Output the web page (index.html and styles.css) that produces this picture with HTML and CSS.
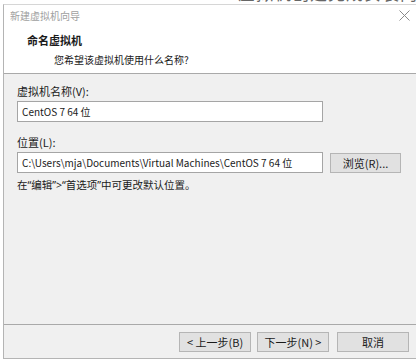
FILE: index.html
```html
<!DOCTYPE html>
<html lang="zh">
<head>
<meta charset="utf-8">
<link rel="stylesheet" href="styles.css">
</head>
<body>
<div class="strip"><span class="strip-text">虚拟机创建完成安装向导</span></div>
<div class="window">
  <div class="titlebar">
    <span class="title">新建虚拟机向导</span>
    <svg class="close" width="11" height="11" viewBox="0 0 11 11"><path d="M0.5 0.5 L10.5 10.5 M10.5 0.5 L0.5 10.5" stroke="#8a8a8a" stroke-width="1" fill="none"/></svg>
  </div>
  <div class="header">
    <div class="h-title">命名虚拟机</div>
    <div class="h-sub">您希望该虚拟机使用什么名称?</div>
  </div>
  <div class="content">
    <div class="label first">虚拟机名称(V):</div>
    <div class="row"><div class="input">CentOS 7 64 位</div></div>
    <div class="label second">位置(L):</div>
    <div class="row">
      <div class="input">C:\Users\mja\Documents\Virtual Machines\CentOS 7 64 位</div>
      <div class="btn browse">浏览(R)...</div>
    </div>
    <div class="hint">在<span class="q">“</span>编辑<span class="q">”&gt;“</span>首选项<span class="q">”</span>中可更改默认位置。</div>
  </div>
  <div class="footer">
    <div class="btn">&lt; 上一步(B)</div>
    <div class="btn">下一步(N) &gt;</div>
    <div class="btn cancel">取消</div>
  </div>
</div>
</body>
</html>
```
FILE: styles.css
```css
html, body {
  margin: 0;
  padding: 0;
  background: #ffffff;
  width: 416px;
  height: 361px;
  overflow: hidden;
  font-family: "Noto Sans CJK SC", "Noto Sans", sans-serif;
  font-size: 11px;
  color: #1a1a1a;
}
.strip {
  height: 4px;
  overflow: hidden;
}
.strip-text {
  display: block;
  padding-left: 238px;
  font-size: 17px;
  letter-spacing: 1px;
  color: #666;
  white-space: nowrap;
  line-height: 20px;
  transform: translateY(-17px);
}
.window {
  margin-left: 3px;
  border-left: 1px solid #b4b4b4;
  border-top: 1px solid #d6d6d6;
  border-bottom: 1px solid #b4b4b4;
  height: 355px;
  box-sizing: border-box;
  display: flex;
  flex-direction: column;
}
.titlebar {
  height: 20px;
  background: #fff;
  display: flex;
  align-items: center;
  justify-content: space-between;
  padding: 0 6px 0 6px;
  flex-shrink: 0;
}
.title {
  font-size: 10px;
  color: #a0a0a0;
}
.header {
  height: 49px;
  flex-shrink: 0;
  background: #fff;
  box-sizing: border-box;
  padding-top: 7px;
  border-bottom: 1px solid #a9a9a9;
}
.h-title {
  font-weight: bold;
  font-size: 11px;
  margin-left: 23px;
  line-height: 17px;
}
.h-sub {
  margin-left: 50px;
  font-size: 10px;
  line-height: 17px;
  margin-top: 2px;
}
.content {
  background: #f0f0f0;
  height: 251px;
  flex-shrink: 0;
  box-sizing: border-box;
  border-bottom: 1px solid #a9a9a9;
  padding: 9px 0 0 13px;
}
.label {
  line-height: 17px;
}
.label.first {
  margin-bottom: 1px;
}
.label.second {
  margin-top: 12px;
  margin-bottom: 1px;
}
.row {
  display: flex;
  align-items: center;
}
.input {
  width: 306px;
  height: 21px;
  box-sizing: border-box;
  border: 1px solid #a5a5a5;
  background: #fff;
  padding-left: 4px;
  font-size: 10px;
  line-height: 19px;
  white-space: nowrap;
  overflow: hidden;
}
.btn {
  height: 20px;
  box-sizing: border-box;
  border: 1px solid #b5b5b5;
  background: #e1e1e1;
  display: flex;
  align-items: center;
  justify-content: center;
  width: 72px;
  line-height: 18px;
  white-space: nowrap;
}
.browse {
  margin-left: 7px;
  width: 71px;
}
.hint {
  margin-top: 3px;
  font-size: 10.5px;
  line-height: 18px;
}
.q {
  font-family: "Noto Sans", sans-serif;
}
.footer {
  flex: 1;
  background: #f0f0f0;
  display: flex;
  justify-content: flex-end;
  align-items: flex-start;
  padding-top: 7px;
  padding-right: 7px;
  gap: 6px;
}
.footer .cancel {
  margin-left: 2px;
}
```
